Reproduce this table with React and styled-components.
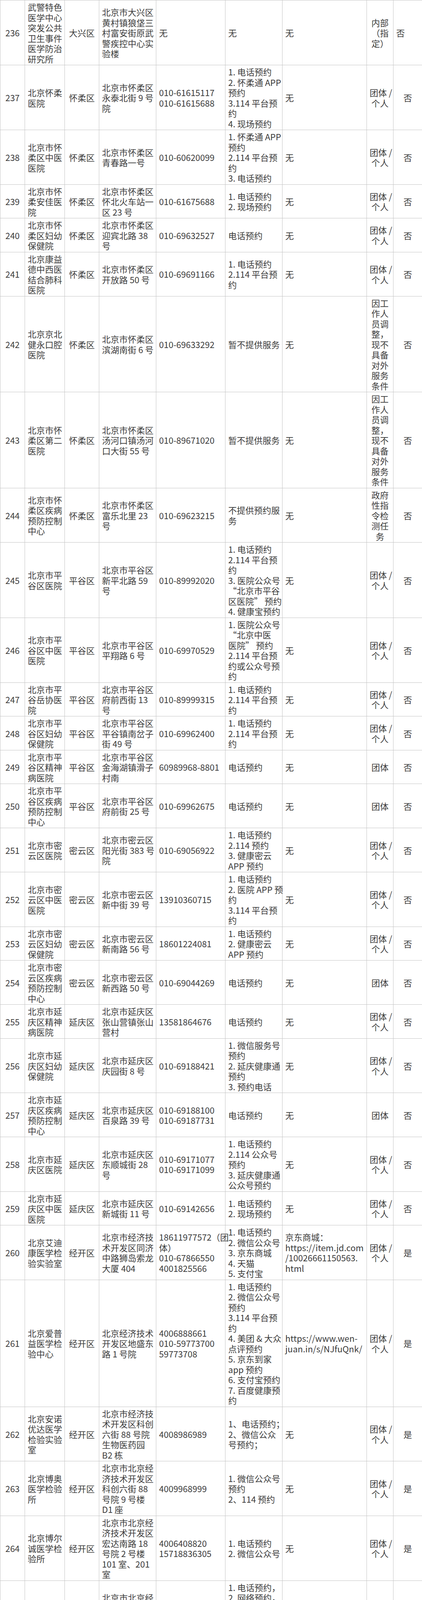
import React from "react";
import styled, { createGlobalStyle } from "styled-components";

const GlobalStyle = createGlobalStyle`
  html, body {
    margin: 0;
    padding: 0;
    background: #ffffff;
  }
  body {
    font-family: "Noto Sans CJK SC", "Noto Sans", sans-serif;
    color: #3c3c3c;
  }
`;

const Sheet = styled.table`
  width: 1080px;
  table-layout: fixed;
  border-collapse: collapse;
  border-spacing: 0;
`;

const Row = styled.tr``;

const Cell = styled.td`
  border: 1px solid #c4c4c4;
  padding: 3px 7px;
  vertical-align: middle;
  text-align: ${(p) => p.$align || "left"};
  font-family: "Noto Sans CJK SC", "Noto Sans", sans-serif;
  font-size: 22px;
  line-height: 26.5px;
  font-weight: 400;
  color: #3c3c3c;
`;

const Line = styled.span`
  display: block;
  height: 26.5px;
  line-height: 26.5px;
  white-space: nowrap;
`;

const widths = [63, 102, 88, 146, 177, 146, 216, 68, 74];
const aligns = ["center", "left", "center", "left", "left", "left", "left", "center", "center"];

const GT = "团体 /|个人";
const GT3 = "团体|/ 个|人";
const WORK = "因工|作人|员调|整，|现不|具备|对外|服务|条件";

const rows = [
  ["236", "武警特色|医学中心|突发公共|卫生事件|医学防治|研究所", "大兴区", "北京市大兴区|黄村镇狼垡三|村富安街原武|警疾控中心实|验楼", "无", "无", "无", "内部|（指|定）", "否", true],
  ["237", "北京怀柔|医院", "怀柔区", "北京市怀柔区|永泰北街 9 号|院", "010-61615117|010-61615688", "1. 电话预约|2. 怀柔通 APP|预约|3.114 平台预|约|4. 现场预约", "无", GT, "否"],
  ["238", "北京市怀|柔区中医|医院", "怀柔区", "北京市怀柔区|青春路一号", "010-60620099", "1. 怀柔通 APP|预约|2.114 平台预|约|3. 电话预约", "无", GT, "否"],
  ["239", "北京市怀|柔安佳医|院", "怀柔区", "北京市怀柔区|怀北火车站一|区 23 号", "010-61675688", "1. 电话预约|2. 现场预约", "无", GT, "否"],
  ["240", "北京市怀|柔区妇幼|保健院", "怀柔区", "北京市怀柔区|迎宾北路 38|号", "010-69632527", "电话预约", "无", GT, "否"],
  ["241", "北京康益|德中西医|结合肺科|医院", "怀柔区", "北京市怀柔区|开放路 50 号", "010-69691166", "1. 电话预约|2.114 平台预|约", "无", GT, "否"],
  ["242", "北京京北|健永口腔|医院", "怀柔区", "北京市怀柔区|滨湖南街 6 号", "010-69633292", "暂不提供服务", "无", WORK, "否"],
  ["243", "北京市怀|柔区第二|医院", "怀柔区", "北京市怀柔区|汤河口镇汤河|口大街 55 号", "010-89671020", "暂不提供服务", "无", WORK, "否"],
  ["244", "北京市怀|柔区疾病|预防控制|中心", "怀柔区", "北京市怀柔区|富乐北里 23|号", "010-69623215", "不提供预约服|务", "无", "政府|性指|令检|测任|务", "否"],
  ["245", "北京市平|谷区医院", "平谷区", "北京市平谷区|新平北路 59|号", "010-89992020", "1. 电话预约|2.114 平台预|约|3. 医院公众号|“北京市平谷|区医院” 预约|4. 健康宝预约", "无", GT, "否"],
  ["246", "北京市平|谷区中医|医院", "平谷区", "北京市平谷区|平翔路 6 号", "010-69970529", "1. 医院公众号|“北京中医|医院” 预约|2.114 平台预|约或公众号预|约", "无", GT, "否"],
  ["247", "北京市平|谷岳协医|院", "平谷区", "北京市平谷区|府前西街 13|号", "010-89999315", "1. 电话预约|2.114 平台预|约", "无", GT, "否"],
  ["248", "北京市平|谷区妇幼|保健院", "平谷区", "北京市平谷区|平谷镇南岔子|街 49 号", "010-69962400", "1. 电话预约|2.114 平台预|约", "无", GT, "否"],
  ["249", "北京市平|谷区精神|病医院", "平谷区", "北京市平谷区|金海湖镇滑子|村南", "60989968-8801", "电话预约", "无", "团体", "否"],
  ["250", "北京市平|谷区疾病|预防控制|中心", "平谷区", "北京市平谷区|府前街 25 号", "010-69962675", "电话预约", "无", "团体", "否"],
  ["251", "北京市密|云区医院", "密云区", "北京市密云区|阳光街 383 号|院", "010-69056922", "1. 电话预约|2.114 预约|3. 健康密云|APP 预约", "无", GT, "否"],
  ["252", "北京市密|云区中医|医院", "密云区", "北京市密云区|新中街 39 号", "13910360715", "1. 电话预约|2. 医院 APP 预|约|3.114 平台预|约", "无", GT, "否"],
  ["253", "北京市密|云区妇幼|保健院", "密云区", "北京市密云区|新南路 56 号", "18601224081", "1. 电话预约|2. 健康密云|APP 预约", "无", GT, "否"],
  ["254", "北京市密|云区疾病|预防控制|中心", "密云区", "北京市密云区|新西路 50 号", "010-69044269", "电话预约", "无", "团体", "否"],
  ["255", "北京市延|庆区精神|病医院", "延庆区", "北京市延庆区|张山营镇张山|营村", "13581864676", "电话预约", "无", GT, "否"],
  ["256", "北京市延|庆区妇幼|保健院", "延庆区", "北京市延庆区|庆园街 8 号", "010-69188421", "1. 微信服务号|预约|2. 延庆健康通|预约|3. 预约电话", "无", GT, "否"],
  ["257", "北京市延|庆区疾病|预防控制|中心", "延庆区", "北京市延庆区|百泉路 39 号", "010-69188100|010-69187731", "电话预约", "无", "团体", "否"],
  ["258", "北京市延|庆区医院", "延庆区", "北京市延庆区|东顺城街 28|号", "010-69171077|010-69171099", "1. 电话预约|2.114 公众号|预约|3. 延庆健康通|公众号预约", "无", GT, "否"],
  ["259", "北京市延|庆区中医|医院", "延庆区", "北京市延庆区|新城街 11 号", "010-69142656", "1. 电话预约|2. 现场预约", "无", GT, "否"],
  ["260", "北京艾迪|康医学检|验实验室", "经开区", "北京市经济技|术开发区同济|中路狮岛索龙|大厦 404", "18611977572（团|体）|010-67866550|4001825566", "1. 电话预约|2. 微信公众号|3. 京东商城|4. 天猫|5. 支付宝", "京东商城：|https://item.jd.com|/10026661150563.|html", GT, "是"],
  ["261", "北京爱普|益医学检|验中心", "经开区", "北京经济技术|开发区地盛东|路 1 号院", "4006888661|010-59773700|59773708", "1. 电话预约|2. 微信公众号|预约|3.114 平台预|约|4. 美团 & 大众|点评预约|5. 京东到家|app 预约|6. 支付宝预约|7. 百度健康预|约", "https://www.wen-|juan.in/s/NJfuQnk/", GT, "是"],
  ["262", "北京安诺|优达医学|检验实验|室", "经开区", "北京市经济技|术开发区科创|六街 88 号院|生物医药园|B2 栋", "4008986989", "1、电话预约；|2、微信公众|号预约；", "无", GT, "是"],
  ["263", "北京博奥|医学检验|所", "经开区", "北京市北京经|济技术开发区|科创六街 88|号院 9 号楼|D1 座", "4009968999", "1. 微信公众号|预约|2、114 预约", "无", GT, "是"],
  ["264", "北京博尔|诚医学检|验所", "经开区", "北京市北京经|济技术开发区|宏达南路 18|号院 2 号楼|101 室、201|室", "4006408820|15718836305", "1. 电话预约|2. 微信公众号", "无", GT, "是"],
  ["265", "北京索真|医学检验|实验室", "经开区", "北京市北京经|济技术开发区|科创六街 88|号院 7 号楼 1|单元 201 室", "13511008175|15811271507|4008088978 转 0", "1. 电话预约，|2. 网络预约，|3. 官方微信公|众号|4. 京东商城|5. 美团 & 大众|点评预约", "无", GT, "是"],
  ["266", "北京星云|医学检验|实验室", "经开区", "北京经济技术|开发区经海四|路 156 号 7 号|楼 5 楼", "010-56380065|18500476653", "1. 电话预约|2. 微信公众号|预约|3. 美团平台预|约", "无", GT3, "是"],
  ["267", "北京全谱|医学检验|实验室", "经开区", "北京经济技术|开发区亦庄生|物医药园 E2|楼一层", "4000108066", "1. 电话预约|2. 微信小程序|预约", "无", GT3, "是"],
  ["268", "北京弘泰|嘉业医学|检验所", "经开区", "北京市经济技|术开发区科创|十四街 20 号|院 14 号楼 B|单元", "010-87163365|17325518329", "1. 电话预约|2. 微信公众号|预约", "https://mp.genolyses.|cn", GT3, "是"],
  ["269", "北京海思|特医学检|验实验室", "经开区", "北京经济技术|开发区地盛北|街 1 号 3 号楼、|4 号楼", "010-67871322|18500087105|18500087108", "1. 电话预约|2. 微信公众号|预约", "无", GT, "是"],
  ["270", "北京核子|华曦医学|检验实验|室", "经开区", "北京市经开区|经海四路 156|号经海产业园|6 号楼 B2-2", "13510726080|18515411296|13798305166", "1. 电话预约|2. 微信公众号|预约", "无", GT, "是"],
  ["271", "北京艾德|摩医学检|验实验室", "经开区", "北京市北京经|济技术开发区|科创三街 24|号 12 幢 1-2|层", "15949790883", "无", "无", "无", "否"],
  ["272", "北京陆道|培医院", "经开区", "北京市经济技|术开发区同济|南路 22 号", "4006163211", "电话预约", "无", GT, "是"],
  ["273", "国家康复|辅具研究|中心附属|康复医院", "经开区", "北京市经济技|术开发区荣华|中路 1 号", "010-58122901（工|作时间）|18910088581（非|工作时间）", "电话预约", "无", "团体", "否"],
  ["274", "中国检验|检疫科学|研究院", "经开区", "北京市北京经|济技术开发区|荣华南路 11|号", "010-53897780|13911066553", "电话预约", "无", "团体", "否"],
  ["275", "北京市监|狱管理局|清河分局|医院", "天津市|宁河县", "天津市宁河县|京山线茶淀站|清河农场", "010-53867705", "电话预约", "无", GT, "否"],
];

const CellLines = ({ text }) =>
  text.split("|").map((t, i) => <Line key={i}>{t}</Line>);

export default function App() {
  return (
    <>
      <GlobalStyle />
      <Sheet>
        <colgroup>
          {widths.map((w, i) => (
            <col key={i} style={{ width: w }} />
          ))}
        </colgroup>
        <tbody>
          {rows.map((r) => (
            <Row key={r[0]}>
              {r.slice(0, 9).map((c, i) => (
                <Cell key={i} $align={i === 8 && r[9] ? "left" : aligns[i]}>
                  <CellLines text={c} />
                </Cell>
              ))}
            </Row>
          ))}
        </tbody>
      </Sheet>
    </>
  );
}
